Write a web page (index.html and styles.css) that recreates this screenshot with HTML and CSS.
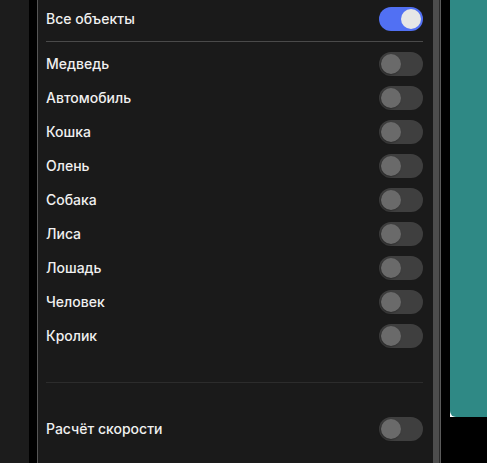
FILE: index.html
```html
<!DOCTYPE html>
<html lang="ru">
<head>
<meta charset="utf-8">
<link rel="stylesheet" href="styles.css">
</head>
<body>
<div class="app">
  <div class="strip"></div>
  <div class="gutter"></div>
  <div class="panel">
    <div class="row row-top">
      <span class="label">Все объекты</span>
      <span class="toggle on"><span class="knob"></span></span>
    </div>
    <div class="divider"></div>
    <div class="list">
      <div class="row"><span class="label">Медведь</span><span class="toggle"><span class="knob"></span></span></div>
      <div class="row"><span class="label">Автомобиль</span><span class="toggle"><span class="knob"></span></span></div>
      <div class="row"><span class="label">Кошка</span><span class="toggle"><span class="knob"></span></span></div>
      <div class="row"><span class="label">Олень</span><span class="toggle"><span class="knob"></span></span></div>
      <div class="row"><span class="label">Собака</span><span class="toggle"><span class="knob"></span></span></div>
      <div class="row"><span class="label">Лиса</span><span class="toggle"><span class="knob"></span></span></div>
      <div class="row"><span class="label">Лошадь</span><span class="toggle"><span class="knob"></span></span></div>
      <div class="row"><span class="label">Человек</span><span class="toggle"><span class="knob"></span></span></div>
      <div class="row"><span class="label">Кролик</span><span class="toggle"><span class="knob"></span></span></div>
    </div>
    <div class="divider dim"></div>
    <div class="row row-speed">
      <span class="label">Расчёт скорости</span>
      <span class="toggle"><span class="knob"></span></span>
    </div>
  </div>
  <div class="scrollbar"><span class="thumb"></span><span class="sep"></span><span class="edge"></span></div>
  <div class="gap"></div>
  <div class="canvas">
    <div class="teal"></div>
  </div>
</div>
</body>
</html>
```
FILE: styles.css
```css
* { box-sizing: border-box; }
html, body {
  margin: 0;
  padding: 0;
  background: #000;
  width: 487px;
  height: 463px;
  overflow: hidden;
}
.app {
  display: flex;
  height: 463px;
  font-family: Inter, "Noto Sans", sans-serif;
  font-size: 14px;
  font-weight: 500;
  color: #f0f0f0;
}
.strip {
  width: 29px;
  background: #1c1c1c;
}
.gutter {
  width: 8px;
  background: #000;
}
.panel {
  width: 396px;
  background: #1a1a1a;
  border-left: 1px solid #555;
  padding: 0 10px 0 8px;
  display: flex;
  flex-direction: column;
}
.row {
  height: 34px;
  display: flex;
  align-items: center;
  justify-content: space-between;
}
.row-top {
  height: 38px;
}
.divider {
  height: 1px;
  background: #4a4a4a;
  margin: 3px 0 5px;
}
.divider.dim {
  background: #2c2c2c;
  margin: 29px 0 29px;
}
.label {
  padding-bottom: 2px;
}
.toggle {
  width: 44px;
  height: 24px;
  border-radius: 12px;
  background: #3f3f3f;
  display: flex;
  align-items: center;
  padding: 0 2px;
}
.knob {
  width: 20px;
  height: 20px;
  border-radius: 50%;
  background: #6a6a6a;
  box-shadow: -1px 1px 2px rgba(0,0,0,0.35);
}
.toggle.on {
  background: #5170f3;
  justify-content: flex-end;
}
.toggle.on .knob {
  background: #e6e6e6;
  box-shadow: none;
}
.scrollbar {
  width: 8px;
  display: flex;
}
.thumb {
  width: 6px;
  background: #4d4d4d;
}
.sep {
  width: 1px;
  background: #2a2a2a;
}
.edge {
  width: 1px;
  background: #5a5a5a;
}
.gap {
  width: 9px;
  background: #000;
}
.canvas {
  flex: 1;
  height: 417px;
  background: linear-gradient(to right, #fff 6px, transparent 6px);
}
.teal {
  height: 100%;
  background: #2f8985;
  border-bottom-left-radius: 6px;
}
```
